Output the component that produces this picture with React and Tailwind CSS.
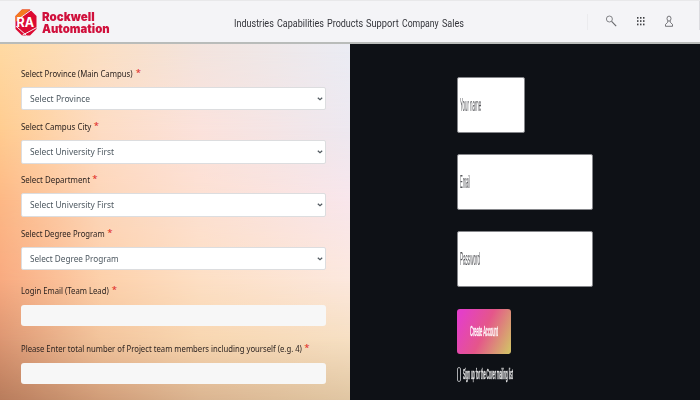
import { useLayoutEffect, useRef } from "react";
import clsx from "clsx";

// Squeezes one line of text horizontally to the width of its box.
function Fit({ className, children }) {
  const box = useRef(null);
  const line = useRef(null);
  useLayoutEffect(() => {
    const fit = () => {
      const ratio = box.current.offsetWidth / line.current.offsetWidth;
      line.current.style.transform = `scaleX(${ratio})`;
    };
    fit();
    document.fonts.ready.then(fit);
  }, []);
  return (
    <span className={clsx("block shrink-0 whitespace-nowrap", className)}>
      <span ref={line} className="inline-block origin-left">
        {children}
      </span>
      <span ref={box} className="block h-0" />
    </span>
  );
}

function Logo() {
  return (
    <div className="flex items-center gap-[5.5px]">
      <div className="relative h-[27px] w-[22px]">
        <svg viewBox="0 0 22 27" className="h-full w-full">
          <path d="M7 .5h8l6.5 6.5v13L15 26.5H7L.5 20V7z" fill="#dc0a32" />
          <path d="M7 .5h8L1.5 12.5.5 12V7z" fill="#f47b20" />
          <path d="M16.5 .8 2 11.3M1 17.2l10.5 9.3M7.5 26.2 21.5 18.6" stroke="#f4f4f7" strokeWidth="1" fill="none" />
        </svg>
        <div className="absolute left-[2px] top-[8px] h-[12px] font-[Inter] text-[12.5px] font-bold leading-[12px] text-white">
          <Fit className="w-[18px]">RA</Fit>
        </div>
      </div>
      <div className="font-[Inter] text-[12px] font-black leading-[11.5px] text-[#d0103c]">
        <Fit className="h-[11.5px] w-[53px]">Rockwell</Fit>
        <Fit className="h-[11.5px] w-[68px]">Automation</Fit>
      </div>
    </div>
  );
}

function Header() {
  return (
    <header className="flex h-11 items-start border-b-2 border-t border-b-[#b9bcba] border-t-[#e8e8ea] bg-[#f4f4f7]">
      <div className="w-[234px] pl-[14.5px] pt-2">
        <Logo />
      </div>
      <nav className="flex w-[353px] gap-[3.5px] pt-[14px] font-[Roboto] text-[11.5px] leading-4 text-[#33343a]">
        <Fit className="w-[39.5px]">Industries</Fit>
        <Fit className="w-[46.5px]">Capabilities</Fit>
        <Fit className="w-[35.5px]">Products</Fit>
        <Fit className="w-[32.5px]">Support</Fit>
        <Fit className="w-[36.5px]">Company</Fit>
        <Fit className="w-[21.5px]">Sales</Fit>
      </nav>
      <div className="flex w-[113px] border-r border-[#dcdce0] pt-[13px]">
        <div className="h-4 w-px bg-[#ebebee]" />
        <svg viewBox="0 0 12 14" className="ml-[17px] h-[14px] w-3" fill="none" stroke="#66676b" strokeWidth=".8">
          <circle cx="4.4" cy="5" r="3" />
          <path d="m6.6 7.4 4.6 4.8" strokeWidth="1.1" />
        </svg>
        <svg viewBox="0 0 8 10" className="ml-[19.5px] mt-[2px] h-[10px] w-2" fill="#3f4044">
          {[0, 3, 6].map((x) =>
            [1, 4.2, 7.6].map((y) => <rect key={`${x}-${y}`} x={x} y={y} width="1.5" height="1.7" />)
          )}
        </svg>
        <svg viewBox="0 0 10 13" className="ml-[19.5px] mt-px h-[13px] w-[10px]" fill="none" stroke="#55565a" strokeWidth=".8">
          <ellipse cx="5" cy="3.6" rx="2" ry="2.5" />
          <path d="M3.9 6 3.6 7.4 1.5 9.4v1.9h7V9.4L6.4 7.4 6.1 6" />
        </svg>
      </div>
    </header>
  );
}

function Label({ width, children }) {
  return (
    <label className="flex text-[9.4px] leading-[14px] text-[#2c2320]">
      <Fit className={width}>{children}</Fit>
      <span className="ml-[3px] text-[9.5px] leading-[12px] text-[#e0261c]">*</span>
    </label>
  );
}

function SelectField({ label, labelWidth, value, valueWidth }) {
  return (
    <div className="h-[53.3px]">
      <Label width={labelWidth}>{label}</Label>
      <div className="mt-[6px] flex h-[23.5px] w-[305.5px] items-center justify-between rounded-[2px] border border-[#dcdddf] bg-white pl-[8px] pr-[2px] text-[9.4px] leading-[14px] text-[#4d5860]">
        <Fit className={valueWidth}>{value}</Fit>
        <svg viewBox="0 0 6 4" className="h-1 w-[6px]" fill="none" stroke="#50585e" strokeWidth="1.2">
          <path d="m.8.7 2.2 2L5.2.7" />
        </svg>
      </div>
    </div>
  );
}

function TextField({ label, labelWidth }) {
  return (
    <div className="h-[57.8px]">
      <Label width={labelWidth}>{label}</Label>
      <div className="mt-[7px] h-[20.8px] w-[305.5px] rounded-[3px] bg-[#f7f7f7]" />
    </div>
  );
}

// Bands of the sunset backdrop; each one fades in over the band above it.
const bands = [
  "bg-[linear-gradient(90deg,#ffd9a2,#fbdfc4_29%,#f3e4de_57%,#ebecf4)]",
  "bg-[linear-gradient(90deg,#ffcc90,#fddcc4_29%,#fbe2dc_57%,#ede8f0)] [mask-image:linear-gradient(transparent_6px,black_86px)]",
  "bg-[linear-gradient(90deg,#fdb885,#fdd6ba_29%,#fde0d2_57%,#f8e6ec)] [mask-image:linear-gradient(transparent_86px,black_156px)]",
  "bg-[linear-gradient(90deg,#f8aa80,#fdd0aa_29%,#fddfc4_57%,#fce8de)] [mask-image:linear-gradient(transparent_156px,black_236px)]",
  "bg-[linear-gradient(90deg,#dc9672,#f2c49c_29%,#f8d6b0_57%,#f6dfc2)] [mask-image:linear-gradient(transparent_236px,black_296px)]",
  "bg-[linear-gradient(90deg,#b87c5c,#d09c78_29%,#dab490_57%,#e0c6a2)] [mask-image:linear-gradient(transparent_296px,black_356px)]",
];

function CampusForm() {
  return (
    <section className="relative h-full w-[350px] font-['Noto_Sans']">
      {bands.map((band) => (
        <div key={band} className={clsx("absolute inset-0", band)} />
      ))}
      <form className="relative pl-[20.7px] pt-[22.9px]">
        <SelectField label="Select Province (Main Campus)" labelWidth="w-[112px]" value="Select Province" valueWidth="w-[59.5px]" />
        <SelectField label="Select Campus City" labelWidth="w-[70px]" value="Select University First" valueWidth="w-[83.5px]" />
        <SelectField label="Select Department" labelWidth="w-[68.5px]" value="Select University First" valueWidth="w-[83.5px]" />
        <SelectField label="Select Degree Program" labelWidth="w-[83.5px]" value="Select Degree Program" valueWidth="w-[89px]" />
        <div className="pt-[4px]">
          <TextField label="Login Email (Team Lead)" labelWidth="w-[88px]" />
          <TextField label="Please Enter total number of Project team members including yourself (e.g. 4)" labelWidth="w-[280.5px]" />
        </div>
      </form>
    </section>
  );
}

function TallInput({ className, textWidth, children }) {
  return (
    <div
      className={clsx(
        "flex h-[56px] items-center rounded-[2px] border border-[#85868a] bg-white pl-[2px] text-[18px] leading-[20px] text-[#55565a]",
        className
      )}
    >
      <Fit className={textWidth}>{children}</Fit>
    </div>
  );
}

function AccountForm() {
  return (
    <section className="h-full w-[350px] bg-[#0e1116] pl-[106.6px] pt-[32.6px] font-['Liberation_Sans']">
      <form className="flex flex-col gap-[21.4px]">
        <TallInput className="w-[68.5px]" textWidth="w-[21px]">Your name</TallInput>
        <TallInput className="w-[136.5px]" textWidth="w-[10px]">Email</TallInput>
        <TallInput className="w-[136.5px]" textWidth="w-[19.5px]">Password</TallInput>
        <div>
          <div className="flex h-[45px] w-[54.5px] items-center justify-center rounded-[3px] bg-[linear-gradient(115deg,#e43fc8_8%,#e5568a_50%,#d3bd68_95%)] text-[15px] leading-[18px] text-white [-webkit-text-stroke:.5px_white]">
            <Fit className="w-[28px]">Create Account</Fit>
          </div>
          <div className="mt-[11.5px] flex items-center gap-[2px] text-[15px] leading-[18px] text-[#f2f2f2] [-webkit-text-stroke:.5px_#f2f2f2]">
            <span className="ml-[.5px] h-[15px] w-[3.5px] rounded-[2px] border border-[#a9abae]" />
            <Fit className="w-[49.5px]">Sign up for the Cover mailing list</Fit>
          </div>
        </div>
      </form>
    </section>
  );
}

export default function App() {
  return (
    <div className="flex h-[400px] w-[700px] flex-col overflow-hidden">
      <Header />
      <main className="flex h-[356px]">
        <CampusForm />
        <AccountForm />
      </main>
    </div>
  );
}
